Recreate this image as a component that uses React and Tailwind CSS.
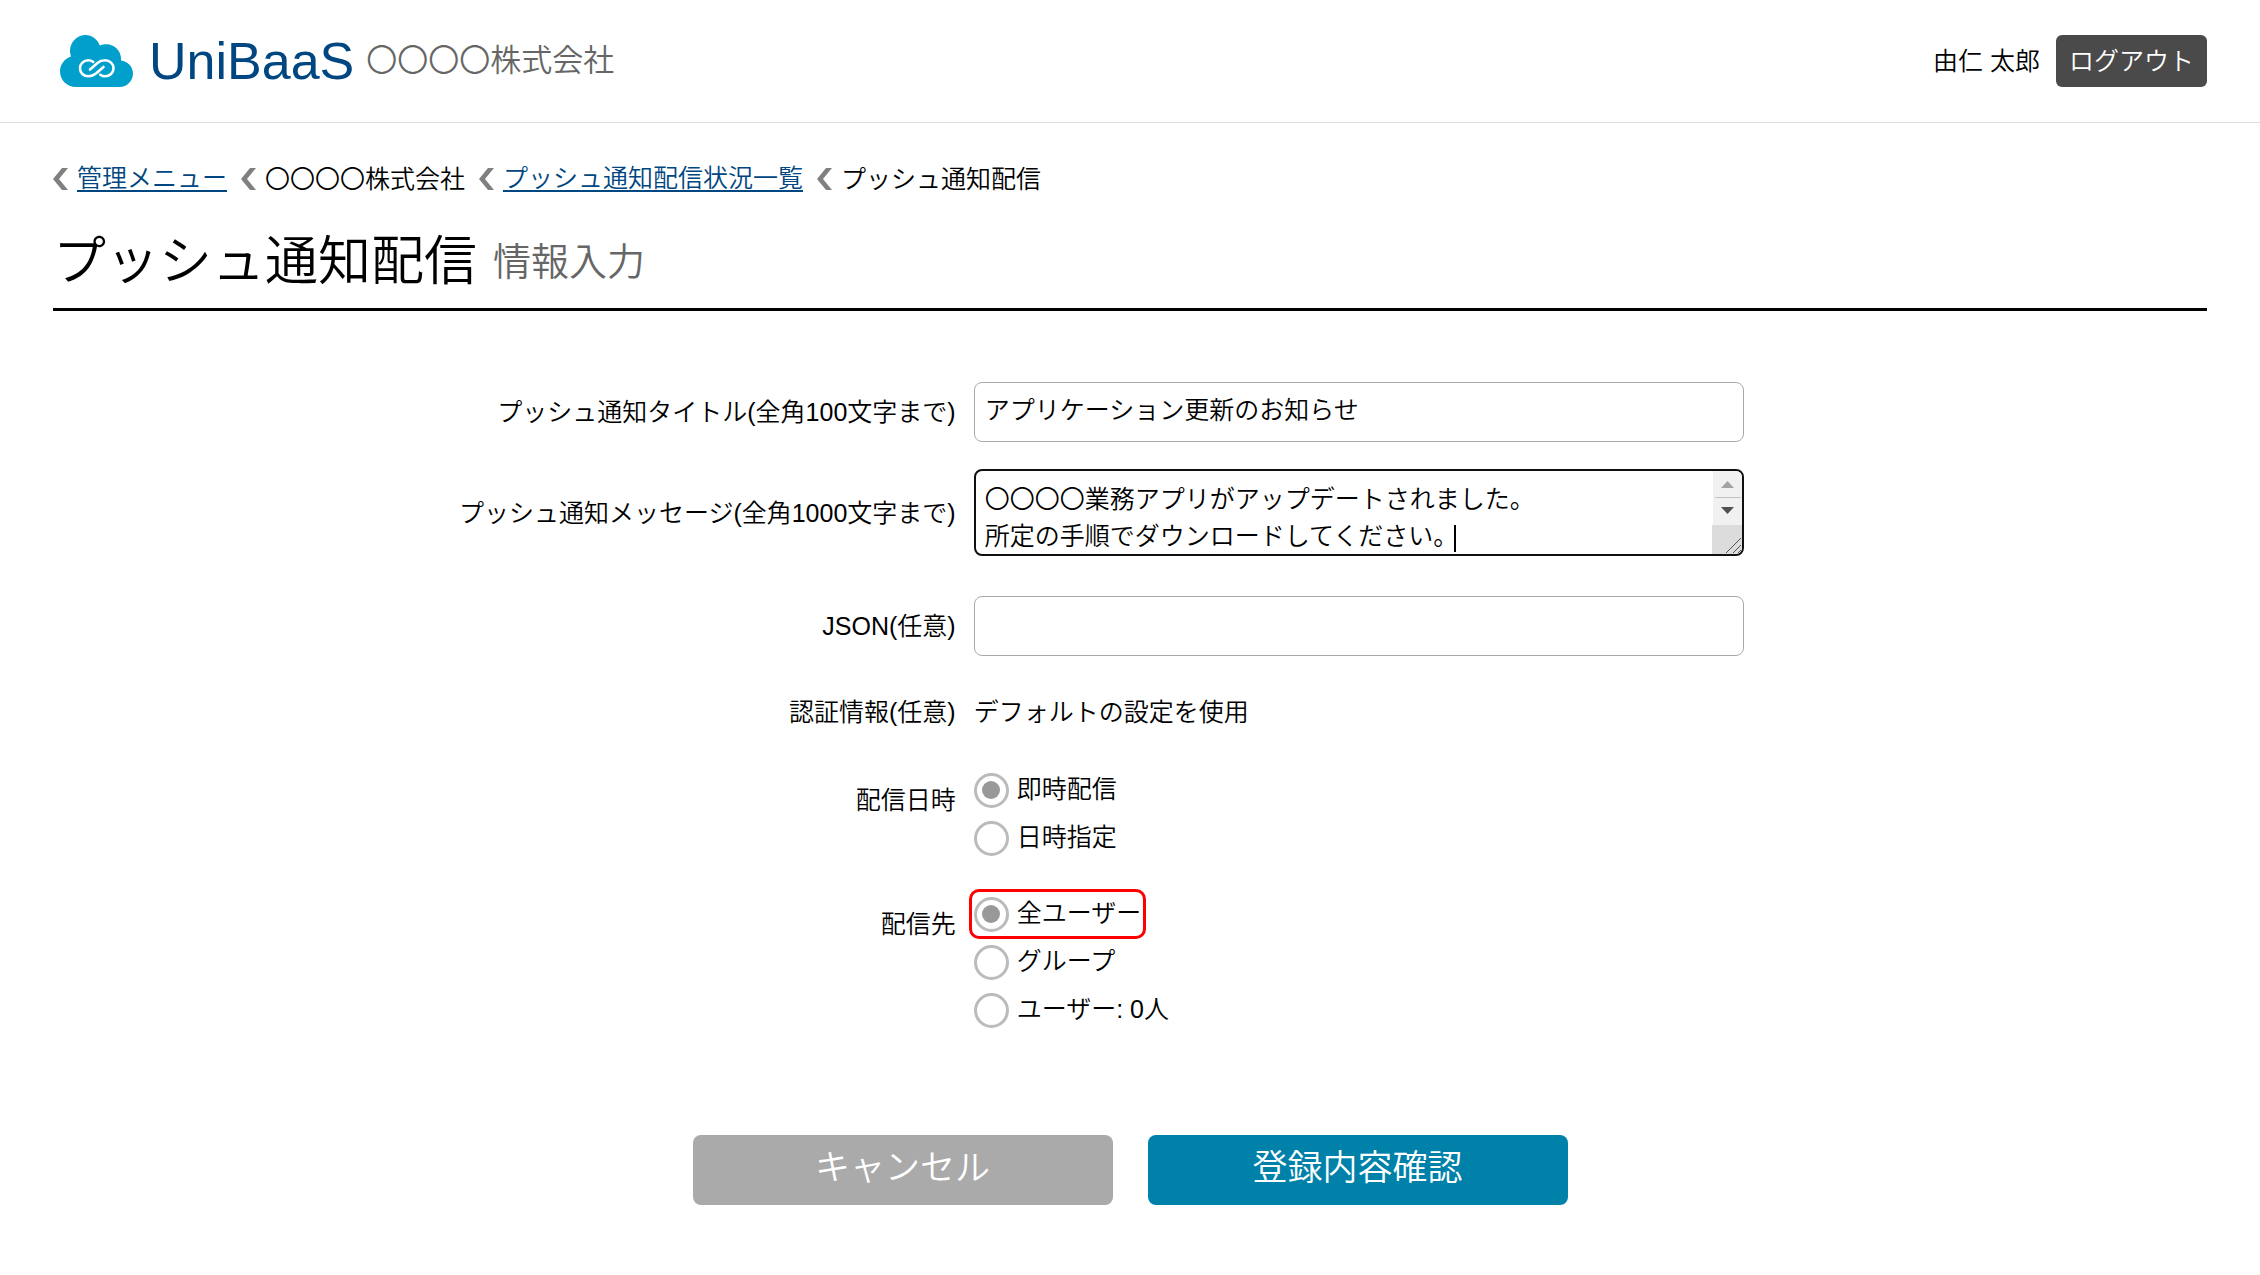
import React, { useState } from 'react';

const CloudLogo = () => (
  <svg className="h-[52px] w-[73px]" viewBox="0 0 73 52" aria-hidden="true">
    <path
      fill="#009fcc"
      d="M16 52C7 52 0 45 0 36.5C0 29.5 4.500 23.500 11 21.500C10.300 19.800 10 18 10 16C10 7 17 0 25.500 0C32 0 37.600 4.200 39.800 10.500C41.800 9.600 44 9.200 46.500 9.200C54.500 9.200 61 15.700 61 23.700V25.500C67.800 26.300 73 31.700 73 38.500C73 46 67 52 59.500 52Z"
    />
    <path
      fill="none"
      stroke="#fff"
      strokeWidth="2.6"
      strokeLinecap="round"
      d="M30 34.500L37.500 28C40 26 42.500 25.300 45 25.300C49.800 25.300 53.500 28.800 53.500 33.300C53.500 38 49.800 41.300 45 41.300C43.300 41.300 41.700 40.700 40.300 39.700M43.500 32L36 38.600C33.500 40.600 31 41.300 28.300 41.300C23.500 41.300 20 37.800 20 33.300C20 28.700 23.500 25.300 28.300 25.300C30 25.300 31.800 25.900 33.200 26.900"
    />
  </svg>
);

const Chevron = () => (
  <svg className="h-[22px] w-[15px] shrink-0" viewBox="0 0 15 22" aria-hidden="true">
    <path fill="#808080" d="M9 0H15L6 11L15 22H9L0 11Z" />
  </svg>
);

const crumbs = [
  { label: '管理メニュー', href: '#menu' },
  { label: '〇〇〇〇株式会社' },
  { label: 'プッシュ通知配信状況一覧', href: '#status' },
  { label: 'プッシュ通知配信' },
];

const Header = () => (
  <header className="flex items-center justify-between border-b border-[#ddd] px-[53px] py-[35px]">
    <div className="flex items-center pl-[7px]">
      <CloudLogo />
      <span className="ml-4 text-[52px] leading-[52px] text-[#004680]">UniBaaS</span>
      <span className="ml-3 text-[31px] leading-[52px] text-[#666]">〇〇〇〇株式会社</span>
    </div>
    <div className="flex items-center gap-4">
      <span>由仁 太郎</span>
      <button type="button" className="h-[52px] rounded-md bg-[#4a4a4a] px-[13px] text-white">
        ログアウト
      </button>
    </div>
  </header>
);

const Breadcrumb = () => (
  <nav className="flex flex-wrap items-center gap-x-[14px]">
    {crumbs.map((crumb) => (
      <div key={crumb.label} className="flex items-center gap-[9px]">
        <Chevron />
        {crumb.href ? (
          <a href={crumb.href} className="border-b-2 border-[#004680] leading-6 text-[#004680]">
            {crumb.label}
          </a>
        ) : (
          <span>{crumb.label}</span>
        )}
      </div>
    ))}
  </nav>
);

const rowClass = 'grid grid-cols-[42%_1fr] items-center gap-x-4';
const labelClass = 'pr-[2px] text-right';
const inputClass =
  'block h-[60px] w-full max-w-[770px] rounded-lg border border-[#aaa] bg-white px-[10px] pb-2 outline-none';

const Radio = ({ name, label, checked, onChange, highlight }) => (
  <label className="relative flex h-12 w-fit items-center gap-2">
    <input
      type="radio"
      name={name}
      checked={checked}
      onChange={onChange}
      className="grid size-[35px] shrink-0 appearance-none place-content-center rounded-full border-3 border-[#bbb] bg-white before:size-[18px] before:rounded-full before:content-[''] checked:before:bg-[#999]"
    />
    <span className="pb-[2px]">{label}</span>
    {highlight && (
      <span className="pointer-events-none absolute -inset-x-[5px] -inset-y-px rounded-[10px] border-3 border-[#f00]" />
    )}
  </label>
);

const ScrollBar = () => (
  <svg
    className="pointer-events-none absolute top-[2px] right-[2px] h-[83px] w-[30px] rounded-r-md"
    viewBox="0 0 30 83"
    aria-hidden="true"
  >
    <rect x="1" width="29" height="54" fill="#f1f1f1" />
    <path fill="#a3a3a3" d="M15.500 10L22 17H9Z" />
    <rect x="3" y="26" width="26" height="1" fill="#c1c1c1" />
    <path fill="#505050" d="M15.500 43L22 36H9Z" />
    <rect y="54" width="30" height="29" fill="#dcdcdc" />
    <path stroke="#555" d="M14 82L29 67M21 82L29 74M26 82L29 79" />
  </svg>
);

const App = () => {
  const [title, setTitle] = useState('アプリケーション更新のお知らせ');
  const [message, setMessage] = useState(
    '〇〇〇〇業務アプリがアップデートされました。\n所定の手順でダウンロードしてください。'
  );
  const [json, setJson] = useState('');
  const [timing, setTiming] = useState('now');
  const [target, setTarget] = useState('all');

  return (
    <div className="bg-white font-['Liberation_Sans','Noto_Sans_CJK_JP',sans-serif] text-[25px] leading-9 font-[350] text-black">
      <Header />
      <main className="px-[53px] pt-[38px] pb-[68px]">
        <Breadcrumb />
        <h1 className="mt-6 flex items-center gap-4 border-b-3 border-black pb-[5px] text-[53px] leading-[82px] font-[350]">
          プッシュ通知配信
          <small className="text-[38px] text-[#666]">情報入力</small>
        </h1>

        <form onSubmit={(e) => e.preventDefault()}>
          <div className={`${rowClass} mt-[71px]`}>
            <label htmlFor="title" className={labelClass}>プッシュ通知タイトル(全角100文字まで)</label>
            <input id="title" className={inputClass} value={title} onChange={(e) => setTitle(e.target.value)} />
          </div>

          <div className={`${rowClass} mt-[27px]`}>
            <label htmlFor="message" className={labelClass}>プッシュ通知メッセージ(全角1000文字まで)</label>
            <div className="relative w-full max-w-[770px]">
              <textarea
                id="message"
                className="block h-[87px] w-full resize-none overflow-hidden rounded-lg border-2 border-[#101010] bg-white py-[10px] pr-10 pl-[9px] leading-[37px] outline-none"
                value={message}
                onChange={(e) => setMessage(e.target.value)}
              />
              <span className="absolute top-[56px] left-[480px] h-[27px] w-[2px] bg-black" />
              <ScrollBar />
            </div>
          </div>

          <div className={`${rowClass} mt-10`}>
            <label htmlFor="json" className={labelClass}>JSON(任意)</label>
            <input id="json" className={inputClass} value={json} onChange={(e) => setJson(e.target.value)} />
          </div>

          <div className={`${rowClass} mt-[38px]`}>
            <span className={labelClass}>認証情報(任意)</span>
            <span>デフォルトの設定を使用</span>
          </div>

          <fieldset className={`${rowClass} mt-9`}>
            <span className={`${labelClass} self-start pt-4`}>配信日時</span>
            <div>
              <Radio name="timing" label="即時配信" checked={timing === 'now'} onChange={() => setTiming('now')} />
              <Radio name="timing" label="日時指定" checked={timing === 'later'} onChange={() => setTiming('later')} />
            </div>
          </fieldset>

          <fieldset className={`${rowClass} mt-7`}>
            <span className={`${labelClass} self-start pt-4`}>配信先</span>
            <div>
              <Radio name="target" label="全ユーザー" checked={target === 'all'} onChange={() => setTarget('all')} highlight />
              <Radio name="target" label="グループ" checked={target === 'group'} onChange={() => setTarget('group')} />
              <Radio name="target" label="ユーザー: 0人" checked={target === 'user'} onChange={() => setTarget('user')} />
            </div>
          </fieldset>

          <div className="mt-[101px] flex justify-center gap-[35px]">
            <button type="button" className="h-[70px] w-[420px] rounded-lg bg-[#aaa] pb-1 text-[35px] text-white">
              キャンセル
            </button>
            <button type="submit" className="h-[70px] w-[420px] rounded-lg bg-[#0081a9] pb-1 text-[35px] text-white">
              登録内容確認
            </button>
          </div>
        </form>
      </main>
    </div>
  );
};

export default App;
